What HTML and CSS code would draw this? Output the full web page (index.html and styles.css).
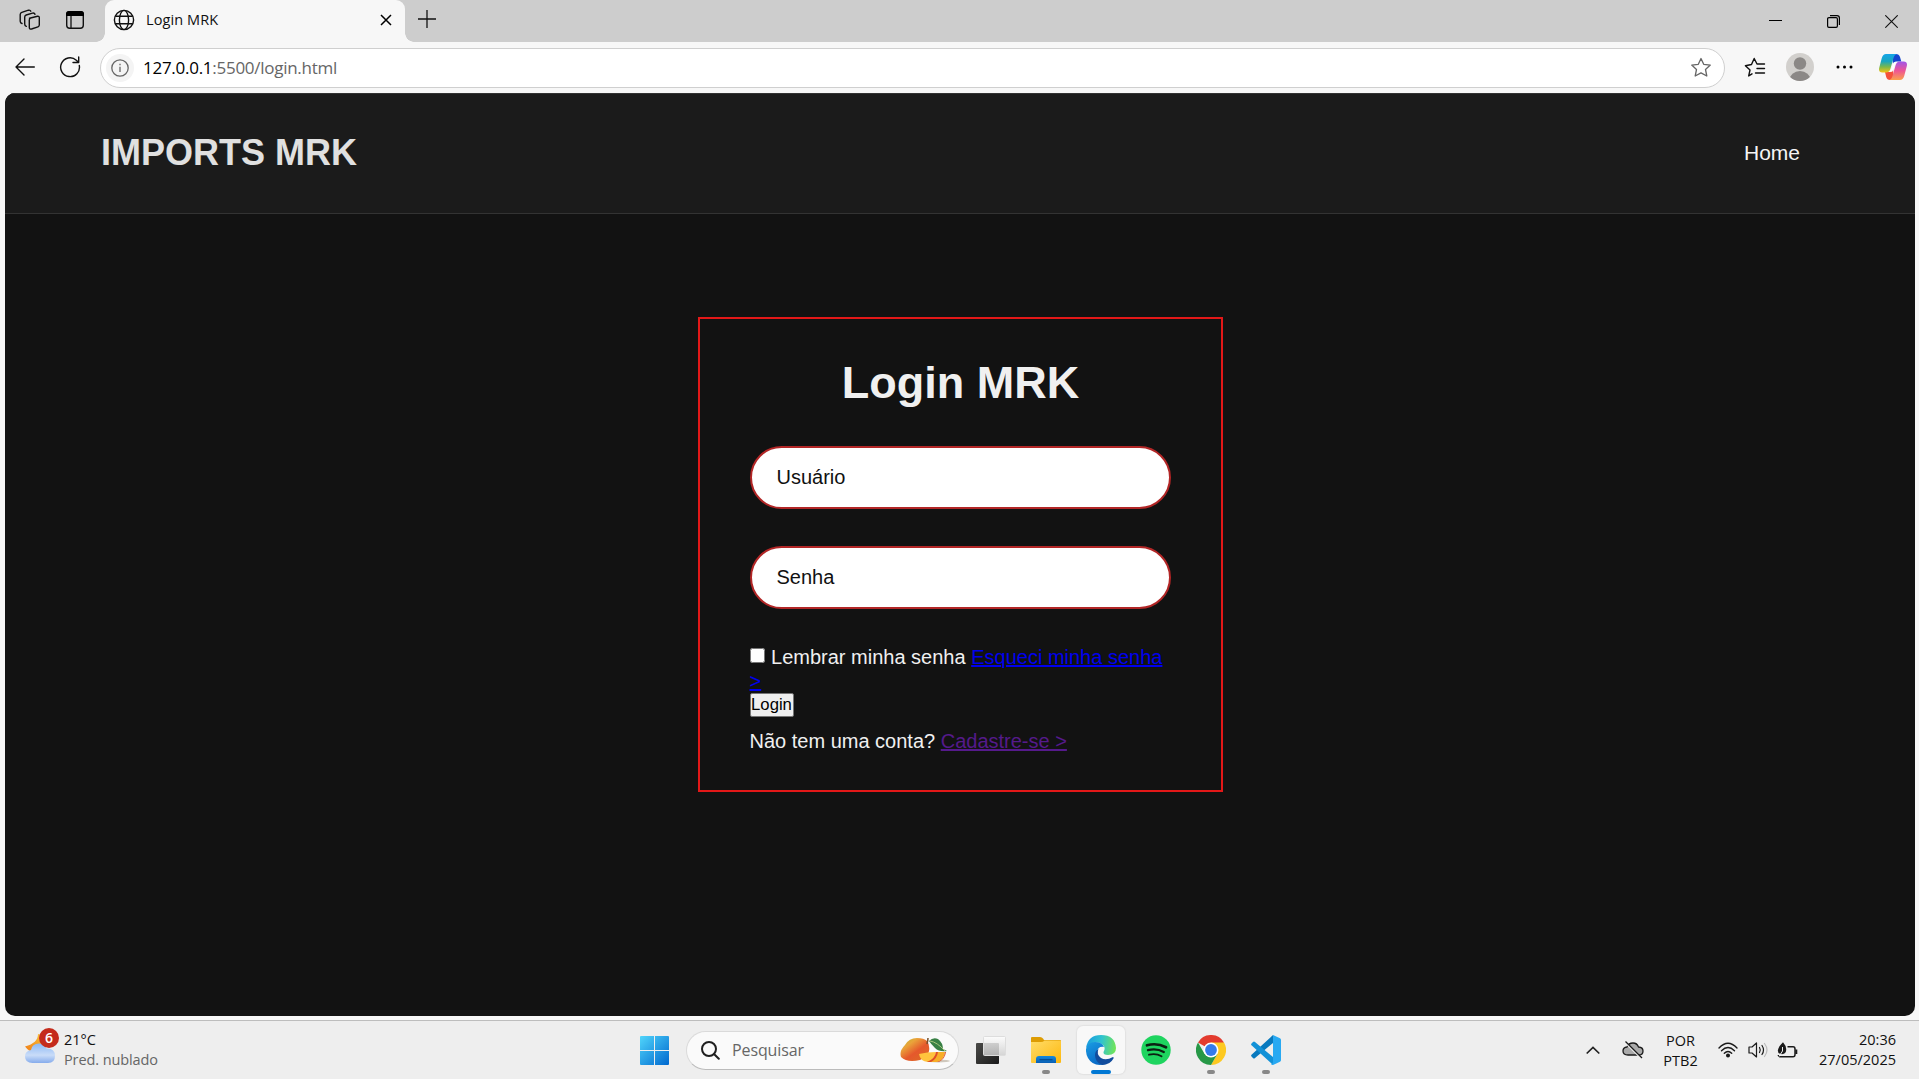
FILE: index.html
```html
<!DOCTYPE html>
<html lang="pt-BR">
<head>
<meta charset="utf-8">
<title>Login MRK</title>
<link rel="stylesheet" href="styles.css">
</head>
<body>
<div class="tabstrip">
  <svg class="ico workspaces" width="22" height="22" viewBox="0 0 22 22" fill="none" stroke="#111" stroke-width="1.4" stroke-linejoin="round" stroke-linecap="round"><path d="M10.5 9.3 18.5 7.3Q20.3 7 20.3 8.8V16Q20.2 17.400 19 17.800L12.500 20Q10.500 20.500 10.300 18.500V11Q10.400 9.500 11.500 9.100Z"/><path d="M7.300 17.300Q5.700 16.800 5.700 15V8Q5.800 6.500 7.200 6L13.500 4.100Q15.500 3.700 16 5.300"/><path d="M3 14.500Q1.200 14 1.200 12.200V5.500Q1.300 3.800 2.800 3.300L9.500 1.200Q11.300 .9 11.800 2.200"/></svg>
  <svg class="ico tabactions" width="20" height="20" viewBox="0 0 20 20"><rect x="1.700" y="1.700" width="16.600" height="16.600" rx="3" fill="none" stroke="#111" stroke-width="1.400"/><path d="M1 6V4Q1 1 4 1H16Q19 1 19 4V6Z" fill="#000"/><path d="M6 6V18" stroke="#111" stroke-width="1.300"/></svg>
  <div class="tab">
    <svg width="22" height="22" viewBox="0 0 22 22" fill="none" stroke="#111" stroke-width="1.400"><circle cx="11" cy="11" r="9.600"/><ellipse cx="11" cy="11" rx="4.600" ry="9.600"/><path d="M2.300 7.300H19.700M2.300 14.700H19.700"/></svg>
    <span class="tab-title">Login MRK</span>
    <svg width="12" height="12" viewBox="0 0 12 12" stroke="#000" stroke-width="1.500"><path d="M1 1 11 11M11 1 1 11"/></svg>
  </div>
  <svg class="newtab" width="18" height="18" viewBox="0 0 18 18" stroke="#111" stroke-width="1.300"><path d="M9 0V18M0 9H18"/></svg>
  <div class="winbtns">
    <svg width="13" height="13" viewBox="0 0 13 13"><path d="M0 5.500H13" stroke="#000"/></svg>
    <svg width="13" height="13" viewBox="0 0 13 13" fill="none" stroke="#000" stroke-width="1.200"><rect x=".6" y="2.600" width="9.800" height="9.800" rx="1.300"/><path d="M3 .6H10Q12.400 .6 12.400 3V10"/></svg>
    <svg width="13" height="13" viewBox="0 0 13 13" stroke="#111" stroke-width="1.100"><path d="M.3 .3 12.700 12.700M12.700 .3 .3 12.700"/></svg>
  </div>
</div>
<div class="toolbar">
  <svg class="back" width="20" height="18" viewBox="0 0 20 18" fill="none" stroke="#111" stroke-width="1.400" stroke-linecap="round" stroke-linejoin="round"><path d="M19.300 9H1M9 1 1 9 9 17"/></svg>
  <svg class="reload" width="22" height="22" viewBox="0 0 22 22" fill="none" stroke="#111" stroke-width="1.400" stroke-linecap="round" stroke-linejoin="round"><path d="M20.300 9.500A9.400 9.400 0 1 1 17.300 4.200L19.500 6.300M19.700 1V6.500H14"/></svg>
  <div class="address">
    <span class="info"><svg width="18" height="18" viewBox="0 0 18 18" fill="none" stroke="#666" stroke-width="1.300"><circle cx="9" cy="9" r="8.200"/><path d="M9 7.800V13M9 4.800V6.200"/></svg></span>
    <span class="url">127.0.0.1<span class="path">:5500/login.html</span></span>
    <svg width="22" height="21" viewBox="0 0 22 21" fill="none" stroke="#666" stroke-width="1.300" stroke-linejoin="round"><path d="M11 1.500 13.700 7.300 20.300 8.100 15.500 12.500 16.800 19 11 15.900 5.200 19 6.500 12.500 1.700 8.100 8.300 7.300Z"/></svg>
  </div>
  <svg class="favs" width="22" height="21" viewBox="0 0 22 21" fill="none" stroke="#111" stroke-width="1.400" stroke-linejoin="round" stroke-linecap="round"><path d="M8 16.800 4.700 18.900 6 13 1.400 8.700 7.500 7.500 10.200 1.500 13 7H20.500M13 11.500H20.500M11.500 16H20.500"/></svg>
  <svg class="avatar" width="28" height="28" viewBox="0 0 28 28"><defs><clipPath id="av"><circle cx="14" cy="14" r="14"/></clipPath></defs><g clip-path="url(#av)"><rect width="28" height="28" fill="#d2d0cd"/><circle cx="14" cy="10.500" r="6.200" fill="#8b8886"/><ellipse cx="14" cy="27" rx="10.500" ry="9" fill="#8b8886"/></g></svg>
  <svg class="dots" width="17" height="4" viewBox="0 0 17 4"><circle cx="2" cy="2" r="1.500"/><circle cx="8.500" cy="2" r="1.500"/><circle cx="15" cy="2" r="1.500"/></svg>
  <svg class="copilot" width="28" height="26" viewBox="0 0 28 26">
    <defs>
      <linearGradient id="c1" x1="0" y1="0" x2="0" y2="1"><stop offset="0" stop-color="#16a5e8"/><stop offset=".4" stop-color="#18a6c0"/><stop offset=".7" stop-color="#7bb84a"/><stop offset="1" stop-color="#f6c416"/></linearGradient>
      <linearGradient id="c2" x1="0" y1="0" x2="0" y2="1"><stop offset="0" stop-color="#a055e8"/><stop offset=".5" stop-color="#ee5595"/><stop offset="1" stop-color="#fba14c"/></linearGradient>
    </defs>
    <path d="M13 0H17Q20 0 21 3L22.300 7.500H17Q14.500 7.500 14 10Z" fill="#1546cf"/>
    <path d="M15 26H11Q8 26 7.200 23L6 18H11Q13.500 18 14 15.500Z" fill="#f4513b"/>
    <path d="M7 0H18Q15.500 .5 14.500 4L11.500 14.500Q10.500 18.500 7 18.500H3.500Q-1 18.500 .3 13.500L2.800 4Q4 0 7 0Z" fill="url(#c1)"/>
    <path d="M21 26H10Q12.500 25.500 13.500 22L16.500 11.500Q17.500 7.500 21 7.500H24.500Q29 7.500 27.700 12.500L25.200 22Q24 26 21 26Z" fill="url(#c2)"/>
    <path d="M14.600 8.500H17.500Q16 9.500 15.400 12L13.400 17.500H10.700Q12.200 16.500 12.800 14Z" fill="#fff"/>
  </svg>
</div>
<div class="viewport">
  <header class="site-header"><h2 class="brand">IMPORTS MRK</h2><span class="nav-link">Home</span></header>
  <main class="site-main">
    <form class="login">
      <h1 class="login-title">Login MRK</h1>
      <input class="field" type="text" placeholder="Usuário">
      <input class="field" type="password" placeholder="Senha">
      <div class="remember"><input class="check" type="checkbox"> Lembrar minha senha <a class="forgot" href="#">Esqueci minha senha &gt;</a></div>
      <button class="submit" type="button">Login</button>
      <p class="signup">Não tem uma conta? <a class="register" href="#">Cadastre-se &gt;</a></p>
    </form>
  </main>
</div>
<div class="taskbar">
  <div class="weather">
    <svg width="36" height="38" viewBox="0 0 36 38">
      <defs><linearGradient id="cl" x1="0" y1="0" x2="0" y2="1"><stop offset="0" stop-color="#8db9f5"/><stop offset=".6" stop-color="#c9dcf8"/><stop offset="1" stop-color="#86acec"/></linearGradient><linearGradient id="mo" x1="1" y1="0" x2="0" y2="1"><stop offset="0" stop-color="#fbc53a"/><stop offset="1" stop-color="#ef7c16"/></linearGradient></defs>
      <path d="M13 7Q13 16 0 19.500Q4 25 10 25Q21 22 20 12Q18 8 13 7Z" fill="url(#mo)"/>
      <path d="M7.500 36Q0 36 0 29.500Q0 24 6 23Q7 16.500 14 16.500Q19.500 16.500 21.500 21.500Q30 21 30 29Q30 36 23 36Z" fill="url(#cl)"/>
      <circle cx="24" cy="11" r="10" fill="#c42b1c"/><text x="24" y="16" class="badge-num">6</text>
    </svg>
    <div class="weather-text"><span class="temp">21°C</span><span class="cond">Pred. nublado</span></div>
  </div>
  <div class="apps">
    <div class="cell"><svg width="29" height="29" viewBox="0 0 29 29"><defs><linearGradient id="w" x1="0" y1="0" x2="1" y2="1"><stop offset="0" stop-color="#50d5fb"/><stop offset="1" stop-color="#0068cf"/></linearGradient></defs><path d="M1 0H14V14H0V1Q0 0 1 0ZM15 0H28Q29 0 29 1V14H15ZM0 15H14V29H1Q0 29 0 28ZM15 15H29V28Q29 29 28 29H15Z" fill="url(#w)"/></svg></div>
    <div class="search">
      <svg width="19" height="19" viewBox="0 0 19 19" fill="none" stroke="#1f1f1f" stroke-width="2" stroke-linecap="round"><circle cx="8" cy="8" r="7"/><path d="M13 13 17.800 17.800"/></svg>
      <span class="search-text">Pesquisar</span>
      <svg width="50" height="26" viewBox="0 0 50 26">
        <defs><linearGradient id="mg" x1="0" y1="0" x2=".9" y2="1"><stop offset="0" stop-color="#b2bd2e"/><stop offset=".3" stop-color="#eaa33a"/><stop offset=".6" stop-color="#e5582c"/><stop offset="1" stop-color="#dc6b24"/></linearGradient></defs>
        <ellipse cx="38" cy="24" rx="12" ry="1.500" fill="#cfc8bd"/>
        <path d="M27 4Q30 8 29 14Q28 20 20 23Q7 26 1 20Q-1 14 5 8Q9 1 17 1Q24 1 27 4Z" fill="url(#mg)"/>
        <path d="M27 7Q28 3 28 1" stroke="#76502b" stroke-width="1.500" fill="none"/>
        <path d="M29 4Q33 0 38 2Q43 6 43 12L47 14Q39 15 35 11Q31 7 29 4Z" fill="#398045"/><path d="M30 4Q37 5 45 14" stroke="#a7c67c" fill="none"/>
        <path d="M19 17Q27 15 36 15Q35 23 28 25Q20 24 19 17Z" fill="#ffc33d"/><path d="M45 15Q44 23 37 25L27 25Q36 22 36 15Z" fill="#f7ae28"/><path d="M36 15Q35 22 27 25L31 25Q37 22 38 15ZM45 15Q44 23 37 25L39 25Q45 22 46 15Z" fill="#df4d26"/>
      </svg>
    </div>
    <div class="cell first"><svg width="30" height="30" viewBox="0 0 30 30"><defs><linearGradient id="tv" x1="0" y1="0" x2="1" y2="1"><stop offset="0" stop-color="#4a4a48"/><stop offset="1" stop-color="#1a1a1a"/></linearGradient><linearGradient id="tw" x1="0" y1="0" x2="0" y2="1"><stop offset="0" stop-color="#fff"/><stop offset="1" stop-color="#cfcfcf"/></linearGradient></defs><rect x="0" y="8" width="23" height="21" rx="1" fill="url(#tv)"/><rect x="7.500" y="1.500" width="22" height="19" rx="1" fill="url(#tw)" fill-opacity=".82" stroke="#ddd"/></svg></div>
    <div class="cell running"><svg width="30" height="28" viewBox="0 0 30 28"><defs><linearGradient id="fo" x1="0" y1="0" x2="1" y2="1"><stop offset="0" stop-color="#ffdc68"/><stop offset="1" stop-color="#fdb80e"/></linearGradient><linearGradient id="fb" x1="0" y1="0" x2="0" y2="1"><stop offset="0" stop-color="#1489dd"/><stop offset="1" stop-color="#0a5fb4"/></linearGradient></defs><path d="M0 2Q0 1 1 1H9Q11 1 12 2.500L13 4H29Q30 4 30 5V9H0Z" fill="#dd9c04"/><path d="M0 6H10Q12 6 13.500 4.500H29Q30 4.500 30 5.500V26Q30 27 29 27H1Q0 27 0 26Z" fill="url(#fo)"/><path d="M5 27V23Q5 20 8 20H22Q25 20 25 23V27Z" fill="url(#fb)"/><path d="M8.500 23.700H21.500" stroke="#074a8e" stroke-width="1.200"/></svg></div>
    <div class="cell active"><svg width="30" height="30" viewBox="0 0 30 30">
      <defs><linearGradient id="e1" x1="0" y1=".4" x2="1" y2=".5"><stop offset="0" stop-color="#199be0"/><stop offset=".5" stop-color="#30c3cf"/><stop offset="1" stop-color="#72e556"/></linearGradient><linearGradient id="e2" x1="0" y1="0" x2=".5" y2="1"><stop offset="0" stop-color="#1b9de3"/><stop offset="1" stop-color="#0869c6"/></linearGradient></defs>
      <path d="M0 13Q2 0 15 0Q29 0 30 13Q30 20 22 20Q17 20 17.500 17Q20 13 17 10Q12 5 5 9Z" fill="url(#e1)"/>
      <path d="M0 14Q2 7 9 7Q16 7 18 12Q12 11 11 17Q10.500 24 19 29.300Q7 32 2 23Q-.3 19 0 14Z" fill="url(#e2)"/>
      <path d="M12.500 14Q10 19 15 23Q20 26 27 22Q28 22 27.500 23.500Q24 30 16 30Q9 27 9 20Q9 16 12.500 14Z" fill="#114c9d"/></svg></div>
    <div class="cell"><svg width="30" height="30" viewBox="0 0 30 30"><circle cx="15" cy="15" r="14.700" fill="#1ed45f"/><g fill="none" stroke="#0b1f12" stroke-linecap="round"><path d="M6 10.300Q16 7.500 25 12.300" stroke-width="2.700"/><path d="M7 15.200Q15.500 13 22.800 17" stroke-width="2.300"/><path d="M8 19.700Q15 18 20.500 21.200" stroke-width="1.900"/></g></svg></div>
    <div class="cell running"><svg width="30" height="30" viewBox="0 0 30 30"><path d="M15 15 2 7.500A15 15 0 0 1 28 7.500Z" fill="#e33b2e"/><path d="M15 7.500H28A15 15 0 0 1 15 30L21.500 18.800Z" fill="#fdc921"/><path d="M2 7.500A15 15 0 0 0 15 30L21.500 18.800 8.500 18.800Z" fill="#279847"/><circle cx="15" cy="15" r="7.500" fill="#fff"/><circle cx="15" cy="15" r="5.900" fill="#347bea"/></svg></div>
    <div class="cell running"><svg width="30" height="30" viewBox="0 0 30 30"><path d="M22 0V8L4 23Q3 24 2 23L.5 21.500Q-.3 20.500 .5 19.700Z" fill="#0879be"/><path d="M22 30V22L4 7Q3 6 2 7L.5 8.500Q-.3 9.500 .5 10.300Z" fill="#1291d7"/><path d="M22 0 29 3.200Q30 3.700 30 5V25Q30 26.300 29 26.800L22 30Q20.500 30 20 29Q22 29.500 22 27Z" fill="#28a9f2"/></svg></div>
  </div>
  <div class="tray">
    <svg class="chev" width="14" height="9" viewBox="0 0 14 9" fill="none" stroke="#222" stroke-width="1.700"><path d="M.7 7.500 7 1.500 13.300 7.500"/></svg>
    <svg class="cloud" width="22" height="18" viewBox="0 0 22 18" stroke-width="1.300" stroke="#1a1a1a"><path d="M6 14Q1 14 1 10Q1 6.500 5 6Q6.500 2 11 2Q15 2 16.500 6Q21 6.300 21 10Q21 14 17 14Z" fill="#aaa"/><path d="M3 1 19 17" stroke="#eee" stroke-width="2"/><path d="M3.500 .5 20 17" fill="none"/></svg>
    <div class="lang"><span>POR</span><span>PTB2</span></div>
    <svg class="wifi" width="20" height="16" viewBox="0 0 20 16" fill="none" stroke="#1a1a1a" stroke-width="1.400" stroke-linecap="round"><path d="M1 6Q10-3.500 19 6M3.500 8.700Q10 2.200 16.500 8.700M6.300 11.200Q10 7.700 13.700 11.200"/><circle cx="10" cy="13.500" r="1.300" fill="#1a1a1a"/></svg>
    <svg class="speaker" width="20" height="18" viewBox="0 0 20 18" fill="none" stroke="#1a1a1a" stroke-width="1.200" stroke-linecap="round" stroke-linejoin="round"><path d="M1 6H4L8.500 2V16L4 12H1ZM11.500 6.500Q13 9 11.500 11.500M14 4.500Q17 9 14 13.500"/><path d="M16.500 2.500Q21.500 9 16.500 15.500" stroke="#bbb"/></svg>
    <svg class="battery" width="21" height="17" viewBox="0 0 21 17" fill="none" stroke="#1a1a1a" stroke-width="1.500"><path d="M10.500 4.800H16Q18 4.800 18 7V12.500Q18 14.800 16 14.800H3Q1.500 14.800 1.200 13"/><path d="M19.300 7.500V12" stroke-width="2"/><path d="M6 .3Q9.500 4 9.200 8Q9 12 5 12.200Q.8 12 .8 8.500Q.8 5.500 6 .3Z" fill="#1a1a1a" stroke="none"/><path d="M5.500 5V9L2 14.500" stroke="#eee" stroke-width="1"/></svg>
    <div class="clock"><span>20:36</span><span>27/05/2025</span></div>
  </div>
</div>
</body>
</html>
```
FILE: styles.css
```css
* { box-sizing: border-box; margin: 0; padding: 0; }
body { width: 1919px; height: 1079px; overflow: hidden; display: flex; flex-direction: column; background: #f7f7f7; font-family: "Open Sans", "Noto Sans", sans-serif; color: #111; }
svg { display: block; flex: none; }

/* browser chrome */
.tabstrip { height: 42px; flex: none; display: flex; background: #cdcdcd; }
.workspaces { margin: 9px 0 0 19px; }
.tabactions { margin: 10px 0 0 24px; }
.tab { position: relative; width: 300px; height: 42px; margin-left: 20px; padding: 0 13px 2px 8px; display: flex; align-items: center; background: #f7f7f7; border-radius: 9px 9px 0 0; }
.tab::before, .tab::after { content: ""; position: absolute; bottom: 0; width: 9px; height: 9px; }
.tab::before { left: -9px; background: radial-gradient(circle at 0 0, transparent 8.5px, #f7f7f7 9px); }
.tab::after { right: -9px; background: radial-gradient(circle at 100% 0, transparent 8.5px, #f7f7f7 9px); }
.tab-title { flex: 1; margin-left: 11px; padding-bottom: 2px; font-size: 14.5px; letter-spacing: .1px; }
.newtab { margin: 10px 0 0 13px; }
.winbtns { margin: 15px 21px 0 auto; display: flex; gap: 45px; }
.toolbar { height: 51px; flex: none; display: flex; align-items: center; padding-bottom: 1px; }
.back { margin-left: 15px; }
.reload { margin-left: 24px; }
.address { width: 1625px; height: 40px; margin: 1px 0 0 19px; padding: 0 12px 0 5px; display: flex; align-items: center; background: #fff; border: 1px solid #cfcfcf; border-radius: 20px; }
.info { width: 28px; height: 28px; border-radius: 14px; background: #f4f4f4; display: flex; align-items: center; justify-content: center; }
.url { flex: 1; margin-left: 9px; font-size: 17px; letter-spacing: -.27px; color: #000; }
.path { color: #666; }
.favs { margin-left: 19px; }
.avatar { margin-left: 20px; }
.dots { margin-left: 22px; }
.copilot { margin-left: 26px; }

/* web page */
.viewport { width: 1910px; height: 923px; flex: none; margin-left: 5px; background: #121212; border-radius: 10px; overflow: hidden; font-family: "Liberation Sans", Arial, sans-serif; font-size: 20px; color: #f0f0f0; }
.site-header { height: 121px; display: flex; align-items: center; justify-content: space-between; padding: 0 115px 2px 96px; background: #1b1b1b; border-top: 1px solid #333; border-bottom: 1px solid #333; }
.brand { font-size: 36px; line-height: 42px; color: #e0e0e0; }
.nav-link { font-size: 21px; line-height: 24px; color: #f5f5f5; }
.site-main { display: flex; justify-content: center; padding-top: 103px; }
.login { width: 525px; height: 475px; padding: 38px 50px 0; border: 2px solid #e31818; display: flex; flex-direction: column; align-items: flex-start; }
.login-title { align-self: center; padding-left: 1px; font-size: 45px; line-height: 52px; margin-bottom: 37px; }
.field { width: 421px; height: 63px; padding: 0 25px; margin-bottom: 37px; border: 2px solid #b22626; border-radius: 32px; background: #fff; font: inherit; color: #111; }
.field::placeholder { color: #111; opacity: 1; }
.field + .remember { margin-top: -1px; }
.remember { width: 421px; line-height: 24px; }
.check { width: 15px; height: 15px; margin-right: 1px; vertical-align: 1px; }
.forgot { color: #0000ee; }
.submit { width: 44px; height: 24px; border: 1px solid #767676; border-radius: 2px; background: #efefef; color: #000; font-family: inherit; font-size: 16.67px; line-height: 20px; }
.signup { margin-top: 13px; line-height: 23px; }
.register { color: #551a8b; }

/* taskbar */
.taskbar { height: 59px; flex: none; margin-top: 4px; display: flex; background: #eee; border-top: 1px solid #bdbdbd; font-size: 14.5px; line-height: 20px; }
.weather { width: 627px; padding-left: 25px; display: flex; }
.weather > svg { margin-top: 6px; }
.weather-text { margin: 9px 0 0 3px; display: flex; flex-direction: column; }
.cond { color: #666; letter-spacing: -.1px; }
.badge-num { font-size: 14px; font-weight: 600; fill: #fff; text-anchor: middle; }
.apps { display: flex; align-items: center; height: 58px; }
.cell { position: relative; width: 55px; height: 48px; display: flex; align-items: center; justify-content: center; }
.first { margin-left: 4px; }
.active { width: 48px; margin: 0 3px 0 4px; border-radius: 6px; background: #f8f8f8; box-shadow: 0 0 1px 1px #e2e2e2; }
.running::after, .active::after { content: ""; position: absolute; bottom: 0; width: 8px; height: 4px; border-radius: 2px; background: #888; }
.active::after { width: 20px; background: #0078d4; }
.search { width: 273px; height: 39px; margin-left: 4px; padding: 0 8px 0 14px; display: flex; align-items: center; background: #fafafa; border: 1px solid #dadada; border-bottom-color: #bbb; border-radius: 20px; }
.search-text { flex: 1; margin-left: 12px; font-size: 16px; letter-spacing: -.1px; color: #666; }
.tray { flex: 1; display: flex; align-items: center; padding-right: 23px; }
.chev { margin-left: auto; }
.cloud { margin-left: 22px; }
.lang { margin-left: 20px; padding-top: 1px; width: 33px; display: flex; flex-direction: column; align-items: center; }
.wifi { margin-left: 21px; }
.speaker { margin-left: 10px; }
.battery { margin-left: 9px; }
.clock { margin-left: 20px; width: 78px; display: flex; flex-direction: column; align-items: flex-end; }
```
